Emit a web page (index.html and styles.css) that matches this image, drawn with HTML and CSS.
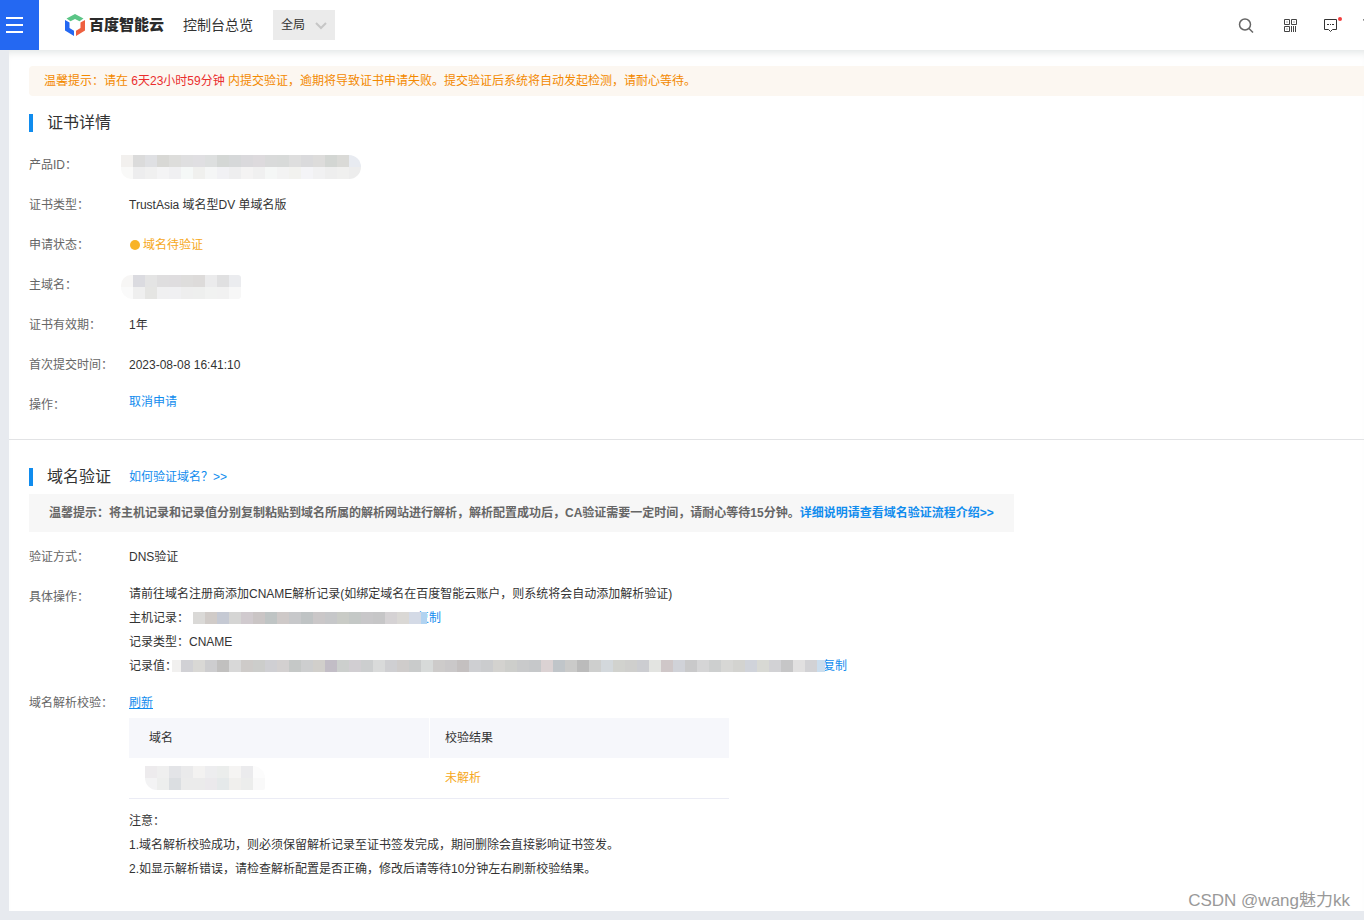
FILE: index.html
```html
<!DOCTYPE html>
<html lang="zh-CN">
<head>
<meta charset="utf-8">
<title>证书详情 - 百度智能云</title>
<link rel="stylesheet" href="styles.css">
</head>
<body>
<header class="topbar">
  <button class="menu-button" type="button" aria-label="菜单">
    <svg width="18" height="18" viewBox="0 0 18 18" stroke="#fff" stroke-width="2"><path d="M0 2h17M0 9h17M0 16h17"/></svg>
  </button>
  <a class="brand" href="#">
    <svg width="20" height="22" viewBox="0 0 20 22">
      <path d="M10 0L18.500 4.500 14.500 7.200 10 5 5.500 7.200 1.500 4.500z" fill="#5bc586"/>
      <path d="M0 6L4.500 8.500V14L9 16.800V22L0 16.500z" fill="#2468f2"/>
      <path d="M20 6L15.500 8.500V14L11 16.800V22L20 16.500z" fill="#ee6040"/>
    </svg>
    <span>百度智能云</span>
  </a>
  <a class="overview" href="#">控制台总览</a>
  <div class="region">
    <select aria-label="区域"><option>全局</option></select>
    <svg class="region-arrow" width="12" height="8" viewBox="0 0 12 8" fill="none" stroke="#c6c6c6" stroke-width="2"><path d="M1 1l5 5 5-5"/></svg>
  </div>
  <nav class="tools" aria-label="工具">
    <button class="tool tool-search" type="button" aria-label="搜索">
      <svg width="16" height="16" viewBox="0 0 16 16" fill="none" stroke="#666" stroke-width="1.500"><circle cx="7" cy="7.500" r="5.500"/><path d="M11 11.500l4 4"/></svg>
    </button>
    <button class="tool" type="button" aria-label="二维码">
      <svg width="16" height="16" viewBox="0 0 16 16" fill="none" stroke="#444"><path d="M1.500 2.500h5v5h-5zM8.500 2.500h5v5h-5zM1.500 9.500h5v5h-5zM8.500 9v6M10.500 9v6M12.500 9v6M3.500 5h1M10.500 5h1M3.500 12h1"/></svg>
    </button>
    <button class="tool" type="button" aria-label="消息">
      <svg width="16" height="16" viewBox="0 0 16 16" fill="none" stroke="#333"><path d="M1.500 2.500h12v10H9.500L7.500 14.500 5.500 12.500h-4z"/><path d="M4 7.500h2M7 7.500h1M9 7.500h2"/></svg>
      <span class="dot"></span>
    </button>
    <button class="tool tool-last" type="button" aria-label="工单">
      <svg width="16" height="16" viewBox="0 0 16 16" fill="none" stroke="#888"><path d="M0 2.500h14l-5 6v5l-4-2v-3z"/></svg>
    </button>
  </nav>
</header>

<main class="page">
  <section class="section">
    <p class="alert">温馨提示：请在 <em>6天23小时59分钟</em> 内提交验证，逾期将导致证书申请失败。提交验证后系统将自动发起检测，请耐心等待。</p>
    <div class="heading heading-first"><h2>证书详情</h2></div>
    <dl class="details">
      <div class="row"><dt>产品ID：</dt><dd><svg class="mosaic mosaic-id" data-cells="f2f0ee dbdbdb dfe0e3 d8d8d5 dddddb dfdfe0 e0dfe2 dddfdf d4d7d5 d6d8d9 dad9dc dddadd d9dada d8dad9 dedede dadadc dddcdb d3d6d3 dadad7 e8ebf1/f9f9f8 ededee f0f0f0 f4f4f5 f0f0f2 f5f8f7 f0f0ee f5f6f6 f1f1f4 eeeeef f4f3f3 f0f0f0 f5f7f6 f3f3f3 f2f2ef f4f4f7 f1f1f2 eeeeee f0f0ef ededed"></svg></dd></div>
      <div class="row"><dt>证书类型：</dt><dd>TrustAsia 域名型DV 单域名版</dd></div>
      <div class="row"><dt>申请状态：</dt><dd class="status"><i class="bullet"></i>域名待验证</dd></div>
      <div class="row"><dt>主域名：</dt><dd><svg class="mosaic mosaic-domain" data-cells="f7f6f5 dbdbe0 e4e4e4 dfdedf dfdddf dedddc dddbda ebebec e0e0e1 ebecef/fafafa efefef e5e5e3 f0f0f1 f0f0f2 eeeeee eeefee f1f2f1 f1f1f1 f7f7f7"></svg></dd></div>
      <div class="row"><dt>证书有效期：</dt><dd>1年</dd></div>
      <div class="row"><dt>首次提交时间：</dt><dd>2023-08-08 16:41:10</dd></div>
      <div class="row"><dt>操作：</dt><dd class="block"><a href="#">取消申请</a></dd></div>
    </dl>
  </section>

  <section class="section section-verify">
    <div class="heading"><h2>域名验证</h2><a href="#">如何验证域名？&gt;&gt;</a></div>
    <p class="notice">温馨提示：将主机记录和记录值分别复制粘贴到域名所属的解析网站进行解析，解析配置成功后，CA验证需要一定时间，请耐心等待15分钟。<a href="#">详细说明请查看域名验证流程介绍&gt;&gt;</a></p>
    <dl class="details">
      <div class="row"><dt>验证方式：</dt><dd>DNS验证</dd></div>
      <div class="row"><dt>具体操作：</dt>
        <dd class="block">
          <p>请前往域名注册商添加CNAME解析记录(如绑定域名在百度智能云账户，则系统将会自动添加解析验证)</p>
          <p class="record"><span>主机记录：</span><svg class="mosaic mosaic-host" data-cells="dad9d7 d0cbc8 c5c9d3 d5d5d4 d0cace cac5c5 bfc4c4 cec9c8 c7c8ca bfc3c4 cac7c8 c6c7c9 c9cbc6 c4c8c6 c8c7c9 c6c6c7 d5d2d4 dad8d5 d4dae6 b1d3f1"></svg><button class="copy" type="button">复制</button></p>
          <p>记录类型：CNAME</p>
          <p class="record"><span>记录值：</span><svg class="mosaic mosaic-value" data-cells="f1f0ef d1d1d5 d9d8d5 cdcdcf c1c0bf d8d8d8 cecbc9 cccdcb cfcfd3 d3d0d0 c5c8c7 cdcecf d1cfcb c2bdc6 cccfcd d1ced2 cccecf d9dada cfcfd2 cfcccb c9cbcb d7dad9 cdcbca cac8c9 c4c0c0 cecfd2 cbccce d3d2cf cdcecb c9cacb c6c8ca dbd2d3 c0c5c9 cacac9 bbbbbb cecfce d3d8dc d1d2ce cfcfcd cccdd1 e3e4e1 cfc7c8 d0d2d8 c9c9ca d5d5d6 cdcfcf d7d7d5 d3d3d0 d0d3da d8d9d4 d2d2d5 c6c6c7 e1e0e0 d2d2d5 cbdded"></svg><button class="copy" type="button">复制</button></p>
        </dd>
      </div>
      <div class="row"><dt>域名解析校验：</dt>
        <dd class="check">
          <a class="refresh" href="#">刷新</a>
          <table class="results">
            <thead><tr><th scope="col">域名</th><th scope="col">校验结果</th></tr></thead>
            <tbody><tr><td><svg class="mosaic mosaic-cell" data-cells="edebed efefef e3e4e7 eaeaeb f3f2f1 ededef ebedec f5f4f3 ebebed fcfcfc/f3f3f4 edeeed dbdee1 ebebeb ebebeb ebe9ec e5e9ea f0efed ecedec f9f9f9"></svg></td><td class="pending">未解析</td></tr></tbody>
          </table>
          <p>注意：</p>
          <p>1.域名解析校验成功，则必须保留解析记录至证书签发完成，期间删除会直接影响证书签发。</p>
          <p>2.如显示解析错误，请检查解析配置是否正确，修改后请等待10分钟左右刷新校验结果。</p>
        </dd>
      </div>
    </dl>
  </section>
</main>
<div class="watermark">CSDN @wang魅力kk</div>
<script src="mosaic.js"></script>
</body>
</html>
```

FILE: styles.css
```css
* { box-sizing: border-box; }

body {
  margin: 0;
  min-height: 100vh;
  position: relative;
  overflow-x: hidden;
  background: #e7eaef;
  color: #333;
  font: 12px/24px "Liberation Sans", "Noto Sans CJK SC", sans-serif;
}

h2, p, dl, dd { margin: 0; }
a { color: #108cee; text-decoration: none; }
button { padding: 0; border: 0; background: none; font: inherit; cursor: pointer; }

.topbar {
  position: relative;
  z-index: 1;
  display: flex;
  align-items: center;
  height: 50px;
  overflow: hidden;
  background: #fff;
}

.menu-button {
  display: flex;
  align-items: center;
  width: 39px;
  height: 50px;
  padding-left: 6px;
  background: #2468f2;
}

.brand {
  display: flex;
  align-items: center;
  gap: 4px;
  margin-left: 26px;
  color: #2b2b2b;
  font-size: 15px;
  font-weight: 900;
}

.overview { margin-left: 19px; color: #333; font-size: 14px; }
.region { position: relative; margin-left: 20px; }

.region select {
  display: block;
  width: 62px;
  height: 30px;
  padding: 0 8px;
  border: 0;
  border-radius: 0;
  appearance: none;
  background: #ebebeb;
  color: #333;
  font: inherit;
}

.region-arrow { position: absolute; right: 8px; top: 12px; pointer-events: none; }
.tools { display: flex; gap: 24px; margin-left: auto; }
.tool { position: relative; display: flex; }
.tool-search { margin-right: 5px; }
.tool-last { margin-right: -15px; }

.dot {
  position: absolute;
  top: 0;
  right: -3px;
  width: 4px;
  height: 4px;
  border-radius: 50%;
  background: #f33e3e;
}

.page {
  margin-left: 9px;
  padding: 16px 0 30px;
  background: #fff;
  box-shadow: inset 0 8px 8px -6px #dfe3e3;
}

.section { padding-left: 20px; }

.section-verify {
  margin-top: 14px;
  padding-top: 23px;
  border-top: 1px solid #e2e3e5;
}

.alert {
  padding: 3px 15px;
  border-radius: 4px 0 0 4px;
  background: #fcf7f1;
  color: #f38900;
  white-space: nowrap;
}

.alert em { color: #ea2e2e; font-style: normal; }

.heading { display: flex; align-items: center; height: 28px; gap: 18px; }
.heading-first { margin: 13px 0 8px; }

.heading h2 {
  padding-left: 14px;
  border-left: 4px solid #108cee;
  font-size: 16px;
  font-weight: 400;
  line-height: 18px;
}

.notice {
  width: fit-content;
  margin: 3px 0 5px;
  padding: 7px 20px;
  background: #f7f7f7;
  color: #666;
  font-weight: 700;
}

.row { display: flex; align-items: flex-start; line-height: 40px; min-height: 40px; }
.row dt { flex: none; width: 100px; color: #666; }
.row dd { flex: 1; }
.row .block { padding: 5px 0; line-height: 24px; }
.row .check { padding-top: 8px; line-height: 24px; }
.row .status { display: flex; align-items: center; gap: 3px; color: #f6a821; }

.bullet {
  width: 10px;
  height: 10px;
  margin-left: 1px;
  border-radius: 50%;
  background: #f8b327;
}

.mosaic { display: block; flex: none; }
.mosaic-id { margin: 10px 0 0 -8px; border-radius: 0 12px 12px 10px; }
.mosaic-domain { margin: 10px 0 0 -8px; border-radius: 10px 3px 3px 12px; }
.mosaic-cell { border-radius: 0 12px 2px 12px; }
.record { display: flex; align-items: center; }
.record .mosaic { position: relative; }
.mosaic-host { margin: 0 -10px 0 4px; }
.mosaic-value { margin: 0 -2px 0 -5px; }
.copy { color: #108cee; }

.refresh { display: block; width: fit-content; text-decoration: underline; }

.results {
  width: 600px;
  max-width: 100%;
  margin: 3px 0 10px;
  border-collapse: separate;
  border-spacing: 0;
  table-layout: fixed;
}

.results th { height: 40px; padding: 0 20px; background: #f6f7fb; font-weight: 400; text-align: left; }
.results th + th { padding: 0 15px; border-left: 1px solid #fff; }
.results td { height: 41px; padding: 0 16px; border-bottom: 1px solid #ebecf5; }
.results .pending { color: #f6a821; }

.watermark {
  position: absolute;
  right: 14px;
  bottom: 7px;
  color: #999;
  font-size: 17px;
}
```

FILE: mosaic.js
```js
const CELL = 12;
const SVG_NS = "http://www.w3.org/2000/svg";
// The last cell of the host record is cut in half, the first and last of the value record are narrower.
const WIDTHS = { "mosaic-host": 234, "mosaic-value": 653 };
const OFFSETS = { "mosaic-value": -3 };

document.querySelectorAll(".mosaic").forEach((svg) => {
  const kind = svg.classList[1];
  const rows = svg.dataset.cells.split("/").map((row) => row.split(" "));
  svg.setAttribute("width", WIDTHS[kind] || rows[0].length * CELL);
  svg.setAttribute("height", rows.length * CELL);
  rows.forEach((row, y) => row.forEach((color, x) => {
    const rect = document.createElementNS(SVG_NS, "rect");
    rect.setAttribute("x", x * CELL + (OFFSETS[kind] || 0));
    rect.setAttribute("y", y * CELL);
    rect.setAttribute("width", CELL);
    rect.setAttribute("height", CELL);
    rect.setAttribute("fill", "#" + color);
    svg.append(rect);
  }));
});
```
